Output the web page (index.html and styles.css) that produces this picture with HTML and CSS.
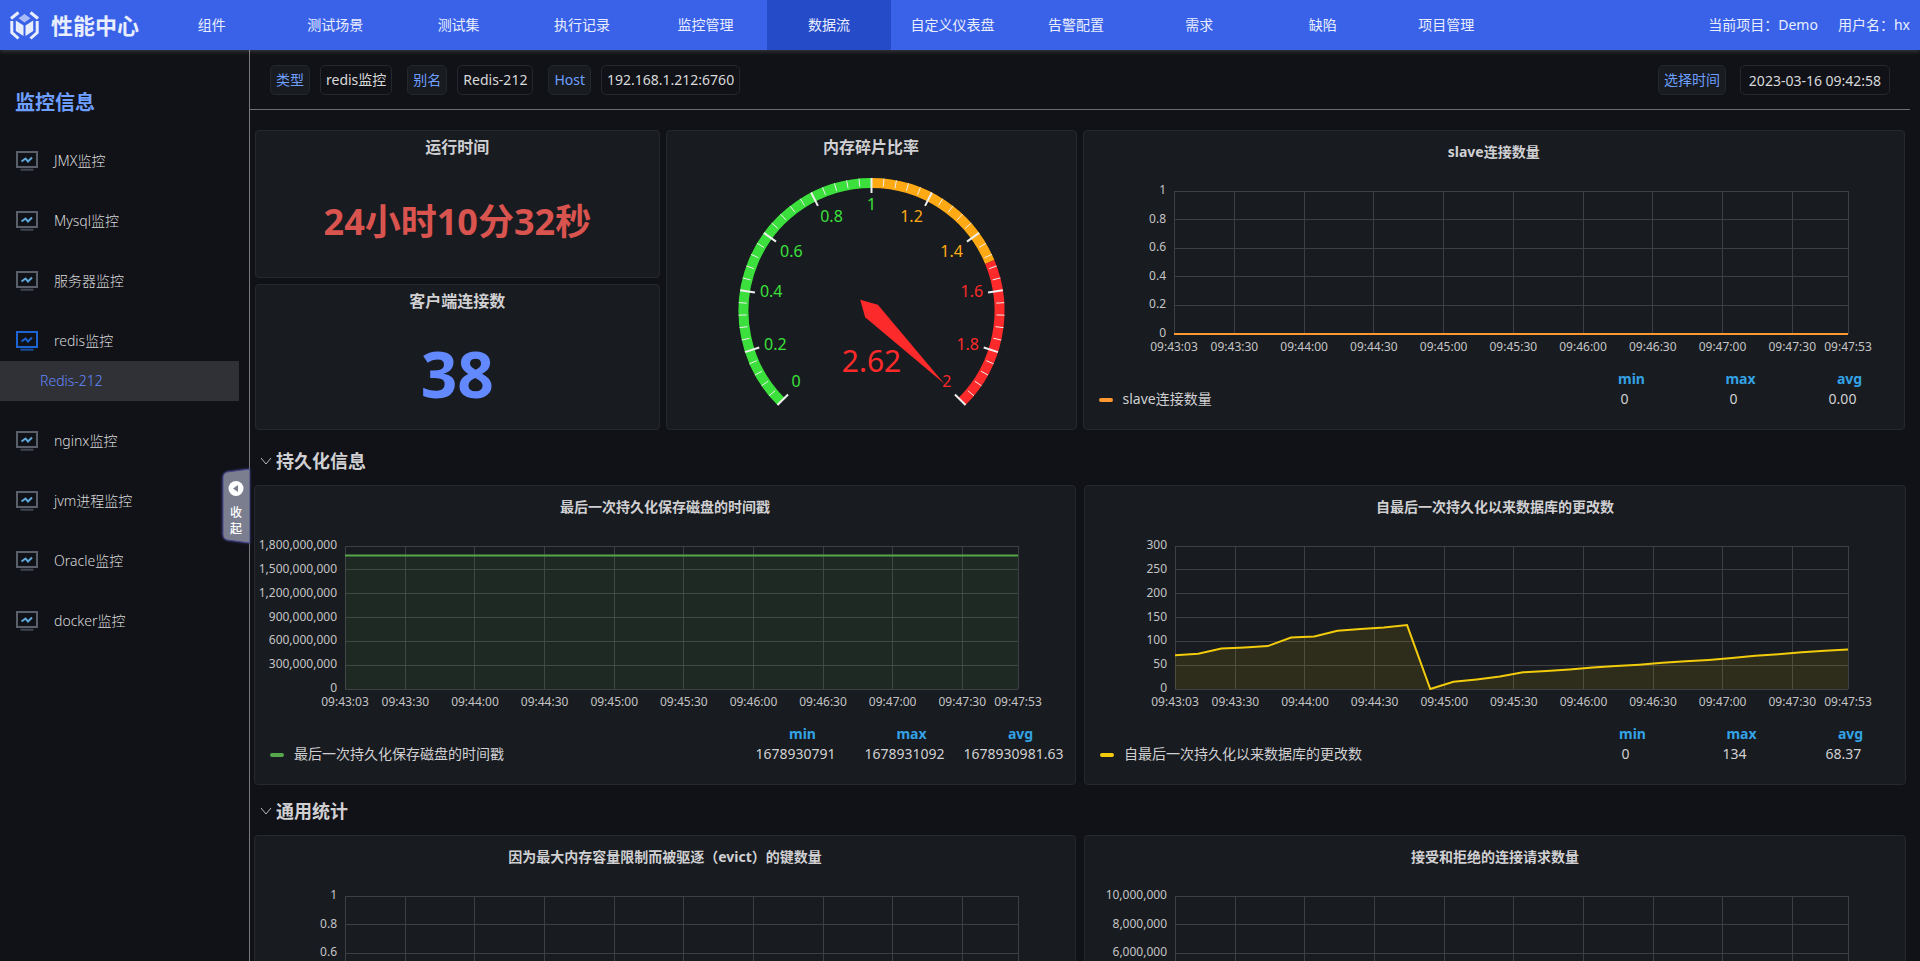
FILE: index.html
```html
<!DOCTYPE html>
<html lang="zh-CN">
<head>
    <meta charset="UTF-8">
    <meta name="viewport" content="width=device-width, initial-scale=1.0">
    <title>性能中心</title>
    <link rel="stylesheet" href="styles.css">
</head>
<body>
    <header class="header">
        <a class="brand" href="#">
            <svg class="brand-logo" viewBox="0 0 29 29" aria-hidden="true">
                <g fill="none" stroke="#e9eeff" stroke-width="3">
                    <path d="M1 7.5 L8.5 1.5"/>
                    <path d="M28 7.5 L20.5 1.5"/>
                    <path d="M1.8 10 V21.5 L8.5 27.5"/>
                    <path d="M27.2 10 V21.5 L20.5 27.5"/>
                </g>
                <path fill="#a9bcf8" d="M14.5 3 L20.5 7.2 L14.5 11.5 L8.5 7.2 Z"/>
                <path fill="#e9eeff" d="M5.8 9.5 L13.5 14.5 V25 L5.8 20 Z"/>
                <path fill="#e9eeff" d="M23.2 9.5 L15.5 14.5 V25 L23.2 20 Z"/>
            </svg>
            <span>性能中心</span>
        </a>
        <nav class="nav">
            <a href="#">组件</a>
            <a href="#">测试场景</a>
            <a href="#">测试集</a>
            <a href="#">执行记录</a>
            <a href="#">监控管理</a>
            <a href="#" class="active">数据流</a>
            <a href="#">自定义仪表盘</a>
            <a href="#">告警配置</a>
            <a href="#">需求</a>
            <a href="#">缺陷</a>
            <a href="#">项目管理</a>
        </nav>
        <div class="user-info">
            <span>当前项目：Demo</span>
            <span>用户名：hx</span>
        </div>
    </header>

    <svg class="sprite" aria-hidden="true">
        <symbol id="monitor" viewBox="0 0 22 20">
            <path d="M1 1 H21 V16 H1 Z"/>
            <path class="stand" d="M4.500 18.700 H17.500"/>
            <path class="wave" d="M5.500 10.500 L9.500 7.500 L12 10.500 L16 6.500"/>
        </symbol>
        <symbol id="chevron" viewBox="0 0 12 12">
            <path fill="none" stroke="#b9bac0" d="M1 3 L6 9 L11 3"/>
        </symbol>
    </svg>

    <div class="layout">
        <aside class="sidebar">
            <h1>监控信息</h1>
            <ul class="menu">
                <li><a href="#"><svg><use href="#monitor"/></svg>JMX监控</a></li>
                <li><a href="#"><svg><use href="#monitor"/></svg>Mysql监控</a></li>
                <li><a href="#"><svg><use href="#monitor"/></svg>服务器监控</a></li>
                <li>
                    <a href="#" class="open"><svg><use href="#monitor"/></svg>redis监控</a>
                    <a href="#" class="sub-item">Redis-212</a>
                </li>
                <li><a href="#"><svg><use href="#monitor"/></svg>nginx监控</a></li>
                <li><a href="#"><svg><use href="#monitor"/></svg>jvm进程监控</a></li>
                <li><a href="#"><svg><use href="#monitor"/></svg>Oracle监控</a></li>
                <li><a href="#"><svg><use href="#monitor"/></svg>docker监控</a></li>
            </ul>
            <button type="button" class="collapse">
                <svg viewBox="0 0 28 76" aria-hidden="true">
                    <path fill="#7b7e8f" stroke="#45468c" d="M28 1 L5 4 Q1 5 1 9 V67 Q1 71 5 72 L28 75 Z"/>
                    <circle cx="14" cy="20.500" r="7.500" fill="#fff"/>
                    <path fill="#7b7e8f" d="M11 20.500 L16 17 V24 Z"/>
                </svg>
                <span>收</span>
                <span>起</span>
            </button>
        </aside>

        <main class="main">
            <div class="filter-bar">
                <div class="pair"><span class="chip key">类型</span><span class="chip">redis监控</span></div>
                <div class="pair"><span class="chip key">别名</span><span class="chip">Redis-212</span></div>
                <div class="pair"><span class="chip key">Host</span><span class="chip">192.168.1.212:6760</span></div>
                <div class="pair time">
                    <label class="chip key" for="startTime">选择时间</label>
                    <input class="chip" type="text" id="startTime" value="2023-03-16 09:42:58" readonly>
                </div>
            </div>

            <div class="overview">
                <div class="stats">
                    <section class="card stat">
                        <h3>运行时间</h3>
                        <p class="uptime">24小时10分32秒</p>
                    </section>
                    <section class="card stat">
                        <h3>客户端连接数</h3>
                        <p class="clients">38</p>
                    </section>
                </div>
                <section class="card stat">
                    <h3>内存碎片比率</h3>
                    <div class="gauge" id="gauge"></div>
                </section>
                <section class="card chart-card">
                    <h3>slave连接数量</h3>
                    <div class="chart" data-chart="slave"></div>
                    <table class="legend">
                        <thead><tr><td></td><th>min</th><th>max</th><th>avg</th></tr></thead>
                        <tbody><tr><td><i class="mark orange"></i>slave连接数量</td><td>0</td><td>0</td><td>0.00</td></tr></tbody>
                    </table>
                </section>
            </div>

            <h2><svg><use href="#chevron"/></svg>持久化信息</h2>
            <div class="row">
                <section class="card chart-card">
                    <h3>最后一次持久化保存磁盘的时间戳</h3>
                    <div class="chart" data-chart="lastSave"></div>
                    <table class="legend">
                        <thead><tr><td></td><th>min</th><th>max</th><th>avg</th></tr></thead>
                        <tbody><tr><td><i class="mark green"></i>最后一次持久化保存磁盘的时间戳</td><td>1678930791</td><td>1678931092</td><td>1678930981.63</td></tr></tbody>
                    </table>
                </section>
                <section class="card chart-card">
                    <h3>自最后一次持久化以来数据库的更改数</h3>
                    <div class="chart" data-chart="changes"></div>
                    <table class="legend">
                        <thead><tr><td></td><th>min</th><th>max</th><th>avg</th></tr></thead>
                        <tbody><tr><td><i class="mark yellow"></i>自最后一次持久化以来数据库的更改数</td><td>0</td><td>134</td><td>68.37</td></tr></tbody>
                    </table>
                </section>
            </div>

            <h2><svg><use href="#chevron"/></svg>通用统计</h2>
            <div class="row">
                <section class="card chart-card">
                    <h3>因为最大内存容量限制而被驱逐（evict）的键数量</h3>
                    <div class="chart" data-chart="evicted"></div>
                </section>
                <section class="card chart-card">
                    <h3>接受和拒绝的连接请求数量</h3>
                    <div class="chart" data-chart="connections"></div>
                </section>
            </div>
        </main>
    </div>

    <script src="charts.js"></script>
</body>
</html>
```

FILE: styles.css
```css
* {
    margin: 0;
    padding: 0;
    box-sizing: border-box;
}

body {
    font-family: 'Noto Sans', 'Noto Sans CJK SC', sans-serif;
    font-size: 14px;
    line-height: 20px;
    background-color: #111217;
    color: #d0d0d3;
    height: 100vh;
    overflow: hidden;
    display: flex;
    flex-direction: column;
}

a {
    color: inherit;
    text-decoration: none;
}

.sprite {
    display: none;
}

/* header */
.header {
    display: grid;
    grid-template-columns: 150px 1fr 412px;
    height: 50px;
    flex: none;
    background-color: #3a62e8;
    color: #e9eeff;
    box-shadow: 0 1px 5px rgba(255, 255, 255, 0.2);
    z-index: 1;
}

.brand {
    display: flex;
    align-items: center;
    gap: 12px;
    padding-left: 10px;
    font-size: 22px;
    font-weight: bold;
    white-space: nowrap;
}

.brand-logo {
    width: 29px;
    height: 29px;
}

.nav {
    display: flex;
}

.nav a {
    flex: 1;
    line-height: 50px;
    text-align: center;
    white-space: nowrap;
}

.nav .active {
    background-color: #264bc8;
}

.user-info {
    display: flex;
    justify-content: flex-end;
    align-items: center;
    gap: 20px;
    padding-right: 10px;
}

/* sidebar */
.layout {
    display: flex;
    flex: 1;
    min-height: 0;
}

.sidebar {
    position: relative;
    flex: none;
    width: 250px;
    padding-right: 10px;
    border-right: 1px solid #77777c;
}

.sidebar h1 {
    padding: 39px 0 24px 15px;
    font-size: 20px;
    line-height: 28px;
    color: #6e9fff;
}

.menu {
    list-style: none;
}

.menu li {
    margin-bottom: 20px;
}

.menu a {
    display: flex;
    align-items: center;
    gap: 16px;
    height: 40px;
    padding-left: 16px;
    font-weight: 300;
    color: #d8d9da;
}

.menu svg {
    width: 22px;
    height: 20px;
    fill: none;
    stroke: #59606c;
    stroke-width: 2;
    --wave: #5fa8da;
    --stand: #3f4652;
}

.menu .open svg {
    stroke: #1b64d2;
    --wave: #1b64d2;
    --stand: #174f9f;
}

.stand {
    stroke: var(--stand);
}

.wave {
    stroke: var(--wave);
}

.menu .sub-item {
    padding-left: 40px;
    background-color: #303136;
    color: #6289ff;
}

.collapse {
    position: absolute;
    top: 418px;
    right: -1px;
    width: 28px;
    height: 76px;
    padding: 0;
    border: none;
    background: none;
    font: 500 12px/16px 'Noto Sans CJK SC', sans-serif;
    color: #fff;
    cursor: pointer;
}

.collapse svg {
    position: absolute;
    inset: 0;
    width: 28px;
    height: 76px;
    filter: drop-shadow(0 0 1px #45468c);
}

.collapse span {
    position: relative;
    top: 14px;
    display: block;
}

/* filter bar */
.main {
    flex: 1;
    min-width: 0;
    padding-right: 10px;
    overflow-x: hidden;
    overflow-y: auto;
    scrollbar-width: none;
}

.filter-bar {
    display: flex;
    gap: 15px;
    height: 60px;
    padding: 15px 20px 0;
    border-bottom: 1px solid #6c6c71;
}

.pair {
    display: flex;
    gap: 10px;
}

.pair.time {
    margin-left: auto;
    gap: 14px;
}

.chip {
    height: 30px;
    padding: 0 5px;
    border: 1px solid #24272c;
    border-radius: 5px;
    background: none;
    color: #d8d9da;
    font: inherit;
    line-height: 28px;
    text-align: center;
    white-space: nowrap;
}

.chip.key {
    background-color: #181b1f;
    color: #6e9fff;
}

input.chip {
    width: 150px;
}

/* cards */
.overview {
    display: grid;
    grid-template-columns: 405fr 411fr 823fr;
    gap: 6px;
    margin: 20px 5px 5px;
}

.row {
    display: grid;
    grid-template-columns: 1fr 1fr;
    gap: 8px;
    margin: 0 4px;
}

.stats {
    display: grid;
    gap: 6px;
}

.card {
    min-width: 0;
    border: 1px solid #25282d;
    border-radius: 4px;
    background-color: #181b1f;
}

.card h3 {
    font-size: 14px;
    text-align: center;
}

.card.stat {
    padding-top: 6px;
}

.card.stat h3 {
    font-size: 16px;
}

.stat p {
    font-weight: bold;
    text-align: center;
}

.uptime {
    padding-top: 35px;
    font-size: 36px;
    line-height: 60px;
    color: #d9534f;
}

.clients {
    padding-top: 33px;
    font-size: 64px;
    line-height: 60px;
    color: #6289ff;
}

.gauge {
    height: 260px;
}

.chart-card {
    height: 300px;
    padding-top: 11px;
}

.chart {
    height: 207px;
}

.chart svg,
.gauge svg {
    display: block;
    width: 100%;
    height: 100%;
}

h2 {
    display: flex;
    align-items: center;
    gap: 4px;
    padding: 14px 10px 12px;
    font-size: 18px;
    line-height: 24px;
}

h2 svg {
    width: 12px;
    height: 12px;
}

/* chart parts */
.grid-line {
    stroke: #3d3f43;
    shape-rendering: crispEdges;
}

.axis-text {
    fill: #c4c4c6;
    font-size: 12px;
}

.legend {
    width: 100%;
    padding-right: 7px;
    border-spacing: 0;
    table-layout: fixed;
}

.legend th,
.legend td {
    width: 109px;
    line-height: 20px;
    text-align: center;
    white-space: nowrap;
}

.legend th {
    padding-left: 14px;
    color: #33a2e5;
}

.legend td:first-child {
    width: auto;
    padding-left: 15px;
    text-align: left;
}

.mark {
    display: inline-block;
    width: 14px;
    height: 4px;
    margin-right: 10px;
    border-radius: 2px;
    vertical-align: middle;
}

.orange {
    background-color: #ff9830;
}

.green {
    background-color: #56a64b;
}

.yellow {
    background-color: #f2cc0c;
}
```

FILE: charts.js
```js
// seconds from the first sample, one label each
const times = [
    [0, '09:43:03'], [26, '09:43:30'], [56, '09:44:00'], [86, '09:44:30'],
    [116, '09:45:00'], [146, '09:45:30'], [176, '09:46:00'], [206, '09:46:30'],
    [236, '09:47:00'], [266, '09:47:30'], [290, '09:47:53']
];

const charts = {
    slave: { max: 1, step: 0.2, color: '#ff9830', data: new Array(30).fill(0) },
    lastSave: { max: 1800000000, step: 300000000, color: '#56a64b', data: new Array(30).fill(1678930981) },
    changes: {
        max: 300, step: 50, color: '#f2cc0c',
        data: [71, 74, 85, 87, 90, 108, 110, 122, 126, 129, 134, 0, 15, 20, 26,
               35, 38, 41, 45, 48, 51, 55, 58, 61, 65, 70, 73, 77, 80, 83]
    },
    evicted: { max: 1, step: 0.2, data: [] },
    connections: { max: 10000000, step: 2000000, data: [] }
};

function drawChart(el) {
    const { max, step, color, data } = charts[el.dataset.chart];
    const left = 90, top = 29, height = 143;
    const width = el.clientWidth - left - 57;
    const bottom = top + height;
    const last = (times.length && times[times.length - 1][0]);
    const x = (sec) => left + width * sec / last;
    const y = (value) => bottom - height * value / max;
    let out = '';

    for (let i = 0; i <= Math.round(max / step); i++) {
        const value = Number((i * step).toFixed(1));
        out += `<line class="grid-line" x1="${left}" x2="${left + width}" y1="${y(value)}" y2="${y(value)}"/>`;
        out += `<text class="axis-text" text-anchor="end" x="${left - 8}" y="${y(value) + 3}">${value.toLocaleString('en-US')}</text>`;
    }
    times.forEach(([sec, label]) => {
        out += `<line class="grid-line" x1="${x(sec)}" x2="${x(sec)}" y1="${top}" y2="${bottom}"/>`;
        out += `<text class="axis-text" text-anchor="middle" x="${x(sec)}" y="${bottom + 17}">${label}</text>`;
    });
    if (data.length) {
        const points = data.map((value, i) => `${left + width * i / (data.length - 1)},${y(value)}`).join(' ');
        out += `<polygon fill="${color}" fill-opacity="0.1" points="${left},${bottom} ${points} ${left + width},${bottom}"/>`;
        out += `<polyline fill="none" stroke="${color}" stroke-width="2" points="${points}"/>`;
    }
    el.innerHTML = `<svg>${out}</svg>`;
}

function drawGauge(el) {
    const r = 133, cx = el.clientWidth / 2, cy = 154;
    const point = (value, radius) => {
        const a = (225 - value * 135) * Math.PI / 180;
        return [cx + radius * Math.cos(a), cy - radius * Math.sin(a)];
    };
    const colorOf = (value) => value <= 1 ? '#3ce03c' : value <= 1.5 ? '#ffa914' : '#fc2a2a';
    const line = (value, length, width) => {
        const [x1, y1] = point(value, r);
        const [x2, y2] = point(value, r - length);
        return `<line stroke="#eee" stroke-width="${width}" x1="${x1}" y1="${y1}" x2="${x2}" y2="${y2}"/>`;
    };
    let out = '';

    [[0, 1], [1, 1.5], [1.5, 2]].forEach(([from, to]) => {
        out += `<path fill="none" stroke="${colorOf(to)}" stroke-width="10" d="M${point(from, r - 5)} A${r - 5} ${r - 5} 0 0 1 ${point(to, r - 5)}"/>`;
    });
    for (let i = 0; i <= 50; i++) {
        const value = i / 25;
        out += i % 5 ? line(value, 8, 1) : line(value, 15, 2);
    }
    for (let i = 0; i <= 10; i++) {
        const value = i / 5;
        const [tx, ty] = point(value, r - 20);
        const dx = (tx - cx) / (r - 20), dy = (ty - cy) / (r - 20);
        const anchor = dx < -0.4 ? 'start' : dx > 0.4 ? 'end' : 'middle';
        const shift = dy < -0.4 ? 12 : dy > 0.4 ? -4 : 4;
        out += `<text font-size="16" fill="${colorOf(value)}" text-anchor="${anchor}" x="${tx}" y="${ty + shift}">${value}</text>`;
    }
    // the needle stops at the end of the scale
    out += `<polygon fill="#fc2a2a" transform="translate(${cx} ${cy}) rotate(45)" points="103,0 0,9 -16,0 0,-9"/>`;
    out += `<text font-size="30" fill="#fc2a2a" text-anchor="middle" x="${cx}" y="${cy + 61}">2.62</text>`;
    el.innerHTML = `<svg>${out}</svg>`;
}

function render() {
    document.querySelectorAll('.chart').forEach(drawChart);
    drawGauge(document.getElementById('gauge'));
}

render();
window.addEventListener('resize', render);
```
